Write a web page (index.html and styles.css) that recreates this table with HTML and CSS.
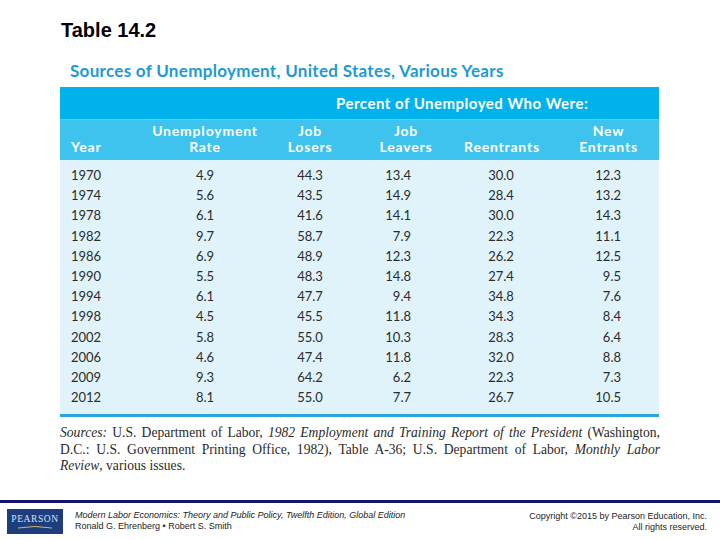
FILE: index.html
```html
<!DOCTYPE html>
<html>
<head>
<meta charset="utf-8">
<link rel="stylesheet" href="styles.css">
</head>
<body>
<div class="page">
  <main class="content">
    <h1 class="slide-title">Table 14.2</h1>
    <h2 class="table-title">Sources of Unemployment, United States, Various Years</h2>
    <div class="table">
      <div class="band">Percent of Unemployed Who Were:</div>
      <div class="heads">
        <div class="h c-year">Year</div>
        <div class="h c-rate">Unemployment<br>Rate</div>
        <div class="h c-los">Job<br>Losers</div>
        <div class="h c-lea">Job<br>Leavers</div>
        <div class="h c-re">Reentrants</div>
        <div class="h c-new">New<br>Entrants</div>
      </div>
      <div class="rows">
        <div class="row"><span class="c-year">1970</span><span class="c-rate">4.9</span><span class="c-los">44.3</span><span class="c-lea">13.4</span><span class="c-re">30.0</span><span class="c-new">12.3</span></div>
        <div class="row"><span class="c-year">1974</span><span class="c-rate">5.6</span><span class="c-los">43.5</span><span class="c-lea">14.9</span><span class="c-re">28.4</span><span class="c-new">13.2</span></div>
        <div class="row"><span class="c-year">1978</span><span class="c-rate">6.1</span><span class="c-los">41.6</span><span class="c-lea">14.1</span><span class="c-re">30.0</span><span class="c-new">14.3</span></div>
        <div class="row"><span class="c-year">1982</span><span class="c-rate">9.7</span><span class="c-los">58.7</span><span class="c-lea">7.9</span><span class="c-re">22.3</span><span class="c-new">11.1</span></div>
        <div class="row"><span class="c-year">1986</span><span class="c-rate">6.9</span><span class="c-los">48.9</span><span class="c-lea">12.3</span><span class="c-re">26.2</span><span class="c-new">12.5</span></div>
        <div class="row"><span class="c-year">1990</span><span class="c-rate">5.5</span><span class="c-los">48.3</span><span class="c-lea">14.8</span><span class="c-re">27.4</span><span class="c-new">9.5</span></div>
        <div class="row"><span class="c-year">1994</span><span class="c-rate">6.1</span><span class="c-los">47.7</span><span class="c-lea">9.4</span><span class="c-re">34.8</span><span class="c-new">7.6</span></div>
        <div class="row"><span class="c-year">1998</span><span class="c-rate">4.5</span><span class="c-los">45.5</span><span class="c-lea">11.8</span><span class="c-re">34.3</span><span class="c-new">8.4</span></div>
        <div class="row"><span class="c-year">2002</span><span class="c-rate">5.8</span><span class="c-los">55.0</span><span class="c-lea">10.3</span><span class="c-re">28.3</span><span class="c-new">6.4</span></div>
        <div class="row"><span class="c-year">2006</span><span class="c-rate">4.6</span><span class="c-los">47.4</span><span class="c-lea">11.8</span><span class="c-re">32.0</span><span class="c-new">8.8</span></div>
        <div class="row"><span class="c-year">2009</span><span class="c-rate">9.3</span><span class="c-los">64.2</span><span class="c-lea">6.2</span><span class="c-re">22.3</span><span class="c-new">7.3</span></div>
        <div class="row"><span class="c-year">2012</span><span class="c-rate">8.1</span><span class="c-los">55.0</span><span class="c-lea">7.7</span><span class="c-re">26.7</span><span class="c-new">10.5</span></div>
      </div>
    </div>
    <div class="sources">
      <span class="line just"><i>Sources:</i> U.S. Department of Labor, <i>1982 Employment and Training Report of the President</i> (Washington,</span>
      <span class="line just">D.C.: U.S. Government Printing Office, 1982), Table A-36; U.S. Department of Labor, <i>Monthly Labor</i></span>
      <span class="line"><i>Review</i>, various issues.</span>
    </div>
  </main>
  <footer class="footer">
    <div class="footer-inner">
      <div class="logo">
        <span class="logo-text">PEARSON</span>
        <svg class="swoosh" width="36" height="4" viewBox="0 0 36 4"><path d="M1 3 Q18 0 35 3" stroke="#d9b36a" stroke-width="1" fill="none"/></svg>
      </div>
      <div class="book">
        <div class="book-title">Modern Labor Economics: Theory and Public Policy, Twelfth Edition, Global Edition</div>
        <div>Ronald G. Ehrenberg • Robert S. Smith</div>
      </div>
      <div class="copy">
        <div>Copyright ©2015 by Pearson Education, Inc.</div>
        <div>All rights reserved.</div>
      </div>
    </div>
  </footer>
</div>
</body>
</html>
```
FILE: styles.css
```css
html, body {
  margin: 0;
  padding: 0;
  background: #ffffff;
}
.page {
  width: 720px;
  height: 540px;
  display: flex;
  flex-direction: column;
  overflow: hidden;
}
.content {
  padding: 18px 61px 0 60px;
}
.slide-title {
  margin: 0 0 0 1px;
  font-family: "Liberation Sans", Arial, sans-serif;
  font-weight: bold;
  font-size: 20px;
  line-height: 24px;
  color: #000;
}
.table-title {
  margin: 19px 0 6px 10px;
  font-family: "Lato", "Open Sans", sans-serif;
  font-weight: bold;
  font-size: 17px;
  letter-spacing: 0.3px;
  line-height: 20px;
  color: #1c9ad4;
}
.table {
  width: 599px;
  font-family: "Lato", "Open Sans", sans-serif;
  border-bottom: 3px solid #2aa6da;
}
.band {
  height: 32px;
  background: #00b2ec;
  color: #fff;
  font-weight: bold;
  font-size: 15px;
  letter-spacing: 0.5px;
  line-height: 32px;
  padding-left: 276px;
}
.heads, .row {
  display: grid;
  grid-template-columns: 80px 130px 80px 112px 92px 105px;
}
.heads {
  height: 41px;
  background: #3ec3ee;
  border-top: 1px solid #5dcdf0;
  box-sizing: border-box;
  align-items: end;
  padding-bottom: 5px;
}
.h {
  color: #fff;
  font-weight: bold;
  font-size: 14px;
  line-height: 16px;
  text-align: center;
  letter-spacing: 0.8px;
}
.h.c-year { text-align: left; padding-left: 11px; }
.h.c-re { padding-right: 12px; }
.h.c-new { padding-left: 4px; }
.rows {
  background: #e0f3fb;
  padding: 5px 0 7px;
}
.row {
  height: 20.2px;
  line-height: 20.2px;
  font-size: 13px;
  color: #2b2b2b;
}
.row .c-year { padding-left: 11px; }
.row .c-rate { text-align: center; }
.row .c-los { text-align: center; }
.row .c-lea { text-align: right; padding-right: 51px; }
.row .c-re { text-align: center; padding-right: 14px; }
.row .c-new { text-align: right; padding-right: 38px; }
.sources {
  width: 600px;
  margin-top: 8px;
  font-family: "Liberation Serif", "Times New Roman", serif;
  font-size: 13.6px;
  line-height: 16.5px;
  color: #2a2a2a;
}
.line {
  display: block;
  white-space: nowrap;
}
.line.just {
  white-space: normal;
  text-align: justify;
  text-align-last: justify;
}
.footer {
  margin-top: auto;
  height: 37px;
  border-top: 3px solid #15156b;
  box-sizing: content-box;
}
.footer-inner {
  display: flex;
  align-items: flex-start;
  padding: 6px 13px 0 7px;
  font-family: "Liberation Sans", Arial, sans-serif;
  font-size: 9px;
  line-height: 11px;
  color: #222;
}
.logo {
  width: 56px;
  height: 25px;
  background: #1d3d7c;
  display: flex;
  flex-direction: column;
  align-items: center;
  justify-content: center;
  gap: 1px;
}
.logo-text {
  font-family: "Liberation Serif", serif;
  color: #d8e2f2;
  font-size: 9.5px;
  letter-spacing: 0.6px;
  line-height: 10px;
}
.swoosh { display: block; }
.book {
  margin-left: 12px;
  margin-top: 1px;
}
.book-title { font-style: italic; }
.copy {
  margin-left: auto;
  margin-top: 2px;
  text-align: right;
}
```
